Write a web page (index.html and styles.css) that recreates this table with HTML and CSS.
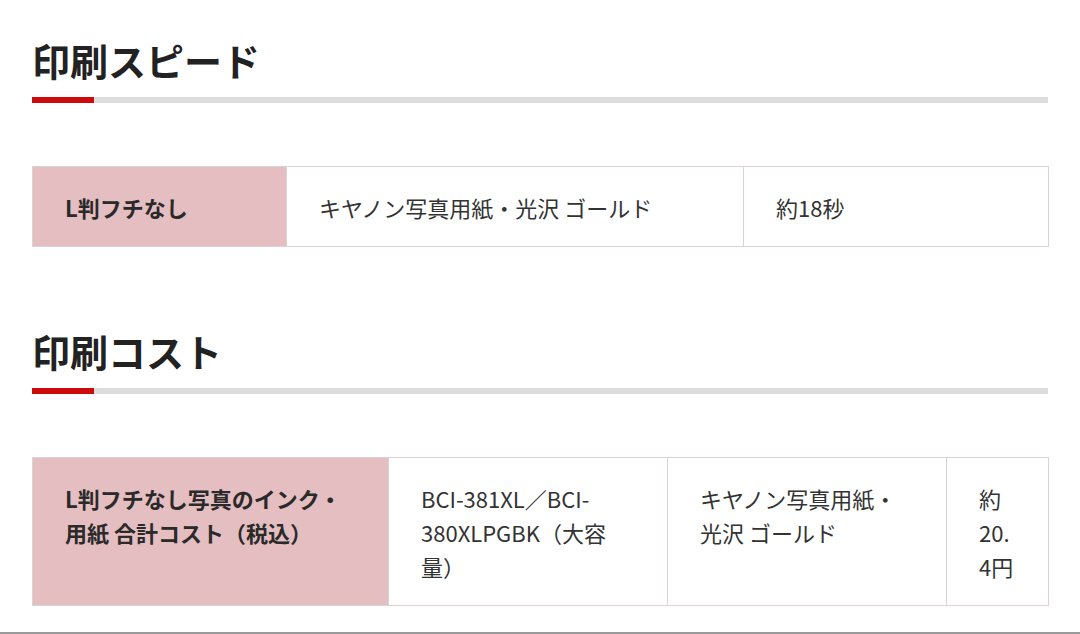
FILE: index.html
```html
<!DOCTYPE html>
<html lang="ja">
<head>
<meta charset="utf-8">
<title>印刷スピード・印刷コスト</title>
<link rel="stylesheet" href="styles.css">
</head>
<body>
<div class="page">
  <section class="spec spec-speed">
    <h2 class="spec-title">印刷スピード</h2>
    <div class="spec-bar"></div>
    <table class="spec-table">
      <colgroup>
        <col class="c-speed-1"><col class="c-speed-2"><col class="c-speed-3">
      </colgroup>
      <tr>
        <th>L判フチなし</th>
        <td>キヤノン写真用紙・光沢 ゴールド</td>
        <td>約18秒</td>
      </tr>
    </table>
  </section>
  <section class="spec spec-cost">
    <h2 class="spec-title">印刷コスト</h2>
    <div class="spec-bar"></div>
    <table class="spec-table">
      <colgroup>
        <col class="c-cost-1"><col class="c-cost-2"><col class="c-cost-3"><col class="c-cost-4">
      </colgroup>
      <tr>
        <th>L判フチなし写真のインク・用紙 合計コスト（税込）</th>
        <td>BCI-381XL／BCI-380XLPGBK（大容量）</td>
        <td>キヤノン写真用紙・光沢 ゴールド</td>
        <td>約20.4円</td>
      </tr>
    </table>
  </section>
</div>
</body>
</html>
```

FILE: styles.css
```css
html, body {
  margin: 0;
  padding: 0;
  background: #ffffff;
}

body {
  font-family: "Noto Sans CJK JP", "Noto Sans", sans-serif;
  color: #333333;
}

.page {
  box-sizing: border-box;
  min-height: 100vh;
  padding: 34px 32px 0 32px;
  border-bottom: 2px solid #9a9a9a;
}

.spec-cost {
  margin-top: 78px;
}

.spec-title {
  margin: 0;
  padding-bottom: 11px;
  font-size: 38px;
  line-height: 52px;
  font-weight: 700;
  color: #222222;
  letter-spacing: 0;
}

.spec-bar {
  height: 6px;
  background: linear-gradient(to right, #cc0a0a 0, #cc0a0a 62px, #dddddd 62px, #dddddd 100%);
}

.spec-table {
  width: 1016px;
  margin-top: 63px;
  border-collapse: collapse;
  table-layout: fixed;
}

.spec-table th,
.spec-table td {
  border: 1px solid #ddd2d2;
  padding: 23px 32px 22px 32px;
  font-size: 22px;
  line-height: 34px;
  text-align: left;
  vertical-align: top;
  overflow-wrap: anywhere;
}

.spec-table th {
  background: #e4bec0;
  font-weight: 700;
  color: #2a2a2a;
}

.spec-table td {
  font-weight: 400;
  color: #333333;
}

.c-speed-1 { width: 254px; }
.c-speed-2 { width: 457px; }
.c-speed-3 { width: 305px; }

.c-cost-1 { width: 356px; }
.c-cost-2 { width: 279px; }
.c-cost-3 { width: 279px; }
.c-cost-4 { width: 102px; }
```
